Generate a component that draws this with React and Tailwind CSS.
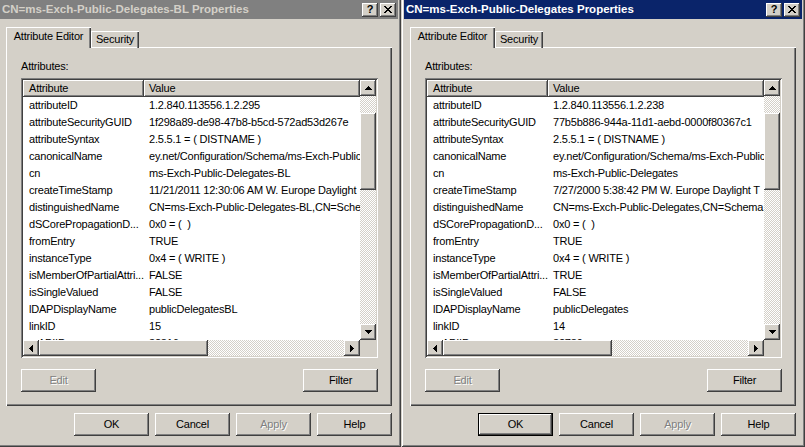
import { clsx } from 'clsx';

// classic 3D bevels, as box-shadows so they never shift layout
const RAISED = 'shadow-[inset_-1px_-1px_#404040,inset_1px_1px_#ffffff,inset_-2px_-2px_#808080]';
const SUNKEN = 'shadow-[inset_1px_1px_#808080,inset_-1px_-1px_#ffffff,inset_2px_2px_#404040,inset_-2px_-2px_#d4d0c8]';
const FRAME = 'shadow-[inset_1px_1px_#d4d0c8,inset_-1px_-1px_#404040,inset_2px_2px_#ffffff,inset_-2px_-2px_#808080]';
const CHECKER = 'bg-[repeating-conic-gradient(#d4d0c8_0_25%,#ffffff_0_50%)] bg-[length:2px_2px]';

const DELEGATES_BL = [
  ['attributeID', '1.2.840.113556.1.2.295'],
  ['attributeSecurityGUID', '1f298a89-de98-47b8-b5cd-572ad53d267e'],
  ['attributeSyntax', '2.5.5.1 = ( DISTNAME )'],
  ['canonicalName', 'ey.net/Configuration/Schema/ms-Exch-Public'],
  ['cn', 'ms-Exch-Public-Delegates-BL'],
  ['createTimeStamp', '11/21/2011 12:30:06 AM W. Europe Daylight'],
  ['distinguishedName', 'CN=ms-Exch-Public-Delegates-BL,CN=Schem'],
  ['dSCorePropagationD...', '0x0 = (  )'],
  ['fromEntry', 'TRUE'],
  ['instanceType', '0x4 = ( WRITE )'],
  ['isMemberOfPartialAttri...', 'FALSE'],
  ['isSingleValued', 'FALSE'],
  ['lDAPDisplayName', 'publicDelegatesBL'],
  ['linkID', '15'],
  ['mAPIID', '32816'],
];

const DELEGATES = [
  ['attributeID', '1.2.840.113556.1.2.238'],
  ['attributeSecurityGUID', '77b5b886-944a-11d1-aebd-0000f80367c1'],
  ['attributeSyntax', '2.5.5.1 = ( DISTNAME )'],
  ['canonicalName', 'ey.net/Configuration/Schema/ms-Exch-Public'],
  ['cn', 'ms-Exch-Public-Delegates'],
  ['createTimeStamp', '7/27/2000 5:38:42 PM W. Europe Daylight T'],
  ['distinguishedName', 'CN=ms-Exch-Public-Delegates,CN=Schema,'],
  ['dSCorePropagationD...', '0x0 = (  )'],
  ['fromEntry', 'TRUE'],
  ['instanceType', '0x4 = ( WRITE )'],
  ['isMemberOfPartialAttri...', 'TRUE'],
  ['isSingleValued', 'FALSE'],
  ['lDAPDisplayName', 'publicDelegates'],
  ['linkID', '14'],
  ['mAPIID', '32789'],
];

const ARROWS = {
  up: 'M3 0h1v1H3zM2 1h3v1H2zM1 2h5v1H1zM0 3h7v1H0z',
  down: 'M0 0h7v1H0zM1 1h5v1H1zM2 2h3v1H2zM3 3h1v1H3z',
  left: 'M3 0h1v7H3zM2 1h1v5H2zM1 2h1v3H1zM0 3h1v1H0z',
  right: 'M0 0h1v7H0zM1 1h1v5H1zM2 2h1v3H2zM3 3h1v1H3z',
};

function ScrollButton({ dir }) {
  const vertical = dir === 'up' || dir === 'down';
  return (
    <div className={clsx('flex h-[16px] w-[16px] shrink-0 items-center justify-center bg-[#d4d0c8]', RAISED)}>
      <svg width={vertical ? 7 : 4} height={vertical ? 4 : 7} shapeRendering="crispEdges">
        <path d={ARROWS[dir]} fill="#000" />
      </svg>
    </div>
  );
}

function Button({ children, disabled, isDefault }) {
  return (
    <div
      className={clsx(
        'flex h-[23px] w-[75px] items-center justify-center bg-[#d4d0c8]',
        RAISED,
        isDefault && 'border border-black',
        disabled ? 'text-[#808080] [text-shadow:1px_1px_0_#ffffff]' : 'text-black',
      )}
    >
      {children}
    </div>
  );
}

function CaptionButton({ children }) {
  return (
    <div className={clsx('flex h-[14px] w-[16px] items-center justify-center bg-[#d4d0c8]', RAISED)}>
      {children}
    </div>
  );
}

function AttributeList({ rows }) {
  return (
    <div className={clsx('flex h-[280px] w-[357px] flex-col bg-white p-[2px]', SUNKEN)}>
      <div className="flex h-[260px]">
        <div className="flex w-[337px] flex-col overflow-hidden">
          <div className="flex h-[17px] shrink-0 bg-[#d4d0c8] leading-[17px]">
            <div className={clsx('w-[121px] shrink-0 pl-[6px]', RAISED)}>Attribute</div>
            <div className={clsx('flex-1 pl-[5px]', RAISED)}>Value</div>
          </div>
          {rows.map(([name, value]) => (
            <div key={name} className="flex h-[17px] shrink-0 items-center whitespace-pre leading-[17px]">
              <div className="w-[121px] shrink-0 overflow-hidden pl-[6px]">{name}</div>
              <div className="min-w-0 flex-1 overflow-hidden pl-[5px]">{value}</div>
            </div>
          ))}
        </div>
        <div className="flex w-[16px] flex-col">
          <ScrollButton dir="up" />
          <div className={clsx('flex-1', CHECKER)}>
            <div className={clsx('mt-[17px] h-[77px] bg-[#d4d0c8]', RAISED)} />
          </div>
          <ScrollButton dir="down" />
        </div>
      </div>
      <div className="flex h-[16px]">
        <div className={clsx('flex w-[337px]', CHECKER)}>
          <ScrollButton dir="left" />
          <div className={clsx('h-[16px] w-[169px] bg-[#d4d0c8]', RAISED)} />
          <div className="flex-1" />
          <ScrollButton dir="right" />
        </div>
        <div className="w-[16px] bg-[#d4d0c8]" />
      </div>
    </div>
  );
}

function PropertiesDialog({ title, active, rows, className }) {
  return (
    <div className={clsx('flex h-[450px] w-[404px] shrink-0 flex-col bg-[#d4d0c8] p-[3px]', FRAME, className)}>
      <div
        className={clsx(
          'flex h-[19px] shrink-0 items-center justify-between pl-[2px] pr-[2px] text-[11.5px] font-bold tracking-normal',
          active ? 'bg-[#0a246a] text-white' : 'bg-[#808080] text-[#d4d0c8]',
        )}
      >
        <span>{title}</span>
        <div className="flex gap-[2px]">
          <CaptionButton>
            <span className="text-[11px] font-bold leading-none text-black">?</span>
          </CaptionButton>
          <CaptionButton>
            <svg width="8" height="7" shapeRendering="crispEdges">
              <path
                d="M0 0h2v1H0zM6 0h2v1H6zM1 1h2v1H1zM5 1h2v1H5zM2 2h4v1H2zM3 3h2v1H3zM2 4h4v1H2zM1 5h2v1H1zM5 5h2v1H5zM0 6h2v1H0zM6 6h2v1H6z"
                fill="#000"
              />
            </svg>
          </CaptionButton>
        </div>
      </div>

      <div className="flex flex-1 flex-col px-[6px]">
        <div className="relative z-10 mt-[8px] flex h-[21px] items-end">
          <div className="flex h-[21px] w-[85px] items-center justify-center bg-[#d4d0c8] pb-[2px] shadow-[inset_1px_1px_#ffffff,inset_-1px_0_#404040,inset_-2px_0_#808080]">
            Attribute Editor
          </div>
          <div className="flex h-[17px] w-[48px] items-center justify-center pb-[1px] shadow-[inset_1px_1px_#ffffff,inset_-1px_0_#404040,inset_-2px_0_#808080]">
            Security
          </div>
        </div>

        <div className="mt-[-1px] flex h-[359px] flex-col pl-[15px] pt-[13px] shadow-[inset_1px_1px_#ffffff,inset_-1px_-1px_#404040,inset_-2px_-2px_#808080]">
          <div className="h-[13px] leading-[13px]">Attributes:</div>
          <div className="mt-[5px]">
            <AttributeList rows={rows} />
          </div>
          <div className="mt-[11px] flex w-[357px] justify-between">
            <Button disabled>Edit</Button>
            <Button>Filter</Button>
          </div>
        </div>

        <div className="mt-[7px] flex justify-end gap-[6px]">
          <Button isDefault={active}>OK</Button>
          <Button>Cancel</Button>
          <Button disabled>Apply</Button>
          <Button>Help</Button>
        </div>
      </div>
    </div>
  );
}

export default function App() {
  return (
    <div className="flex h-[447px] w-[805px] overflow-hidden bg-[#d4d0c8] font-['Liberation_Sans',Arial,sans-serif] text-[11px] tracking-[-0.2px] text-black">
      <PropertiesDialog
        className="ml-[-3px] mt-[-3px]"
        title="CN=ms-Exch-Public-Delegates-BL Properties"
        rows={DELEGATES_BL}
      />
      <PropertiesDialog
        className="mt-[-3px]"
        title="CN=ms-Exch-Public-Delegates Properties"
        rows={DELEGATES}
        active
      />
    </div>
  );
}
